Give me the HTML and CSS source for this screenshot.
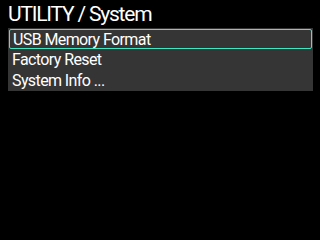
FILE: index.html
```html
<!DOCTYPE html>
<html>
<head>
<meta charset="utf-8">
<link rel="stylesheet" href="styles.css">
</head>
<body>
<div class="screen">
  <div class="title">UTILITY / System</div>
  <div class="menu">
    <div class="item selected">USB Memory Format</div>
    <div class="item">Factory Reset</div>
    <div class="item">System Info ...</div>
  </div>
</div>
</body>
</html>
```
FILE: styles.css
```css
html, body {
  margin: 0;
  padding: 0;
  background: #000;
}
.screen {
  width: 320px;
  height: 240px;
  background: #000;
  font-family: Roboto, "Liberation Sans", sans-serif;
  color: #fff;
  padding: 0 7px 0 8px;
  box-sizing: border-box;
}
.title {
  font-size: 21px;
  letter-spacing: -1.2px;
  line-height: 28px;
  height: 28px;
}
.menu {
  background: #353535;
  display: flex;
  flex-direction: column;
}
.item {
  height: 21px;
  line-height: 21px;
  font-size: 16px;
  letter-spacing: -0.6px;
  padding-left: 4px;
  box-sizing: border-box;
}
.item.selected {
  border: 1px solid #3ee8c2;
  border-radius: 2px;
  line-height: 19px;
  padding-left: 3px;
  margin: 1px 1px 0 1px;
  height: 20px;
}
```
